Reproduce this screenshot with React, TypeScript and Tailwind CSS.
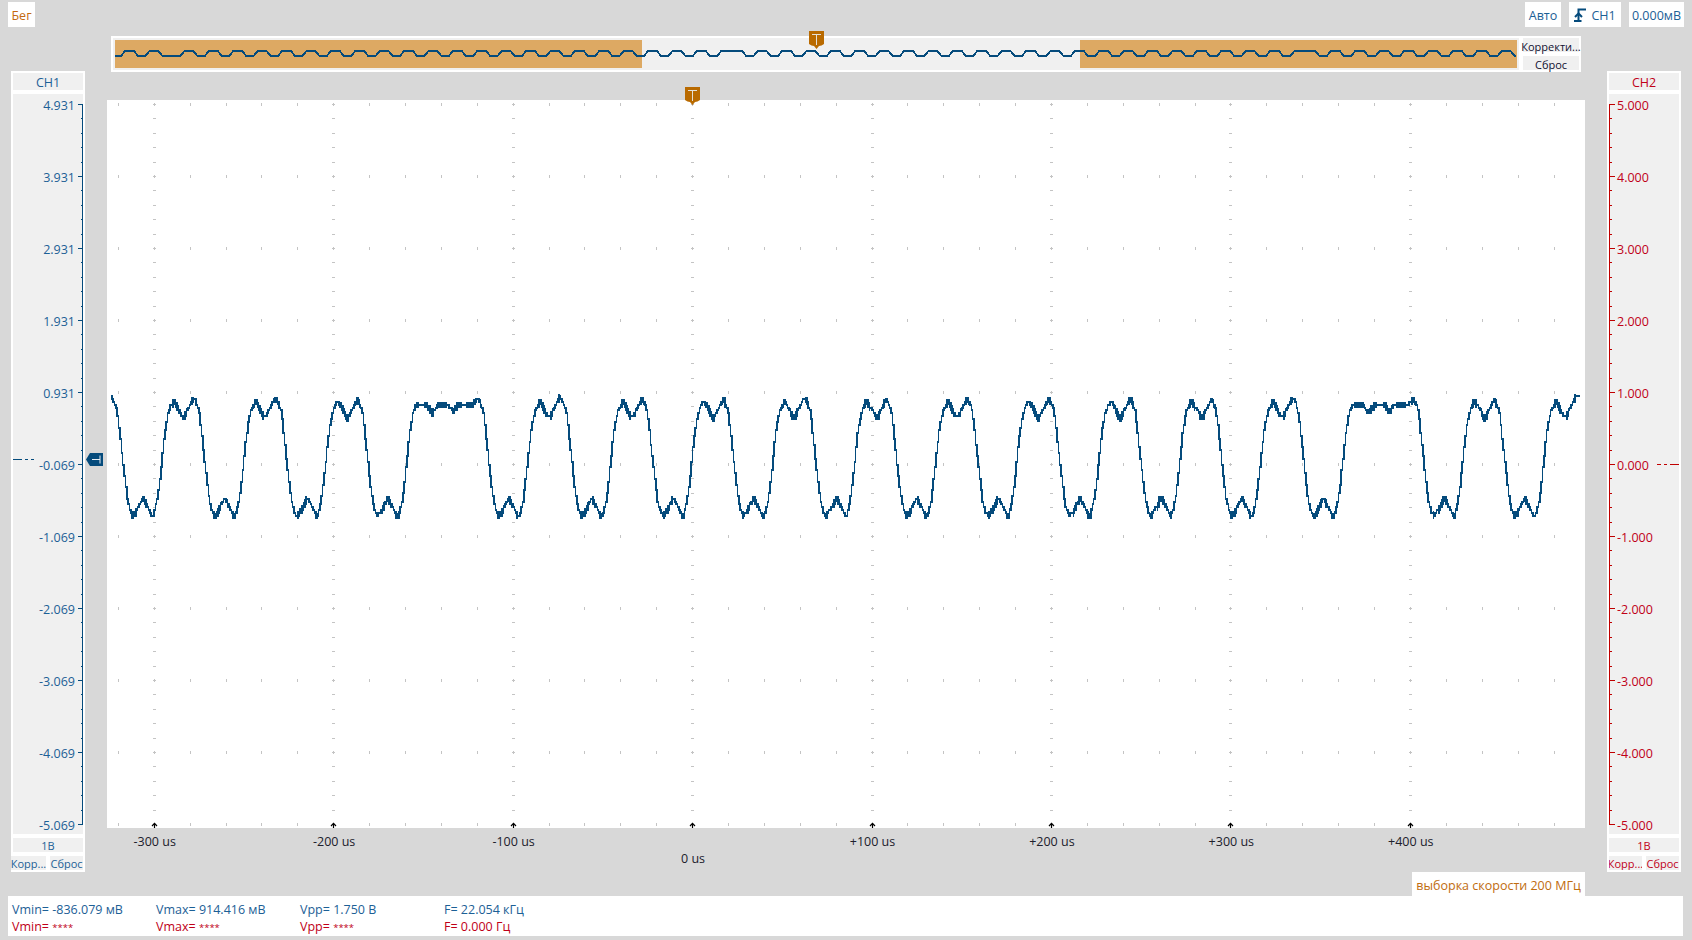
import React from "react";

const BLUE = "#054b7c";
const TXT_BLUE = "#1c6096";
const RED = "#c00018";
const ORANGE_TXT = "#c06c10";

/* --- main waveform --- */
const NORMAL: [number, number][] = [
  [0, 397], [3, 404], [5.7, 413], [9, 445], [12.4, 475], [15.7, 502], [18, 511], [20.7, 516],
  [26, 508], [31, 497], [36, 508], [41, 518], [45.7, 498], [49, 470], [52.4, 435], [55.7, 415],
  [59, 405], [62, 401], [67, 410], [71.4, 419], [76, 409], [81.5, 397],
];
const FLAT: [number, number][] = [
  [0, 397], [3, 404], [5.7, 413], [9, 445], [12.4, 475], [15.7, 502], [18, 511], [20.7, 516],
  [26, 508], [31, 497], [36, 508], [41, 518], [45.7, 498], [49, 470], [52.4, 435], [55.7, 415],
  [58, 406], [63, 404], [70, 405], [75, 413], [80, 406], [85, 404], [92, 405], [96, 412],
  [100, 406], [105, 404], [112, 406], [116, 404], [121, 397],
];
const peaks = [112, 194, 276, 357, 478, 561, 642, 723, 805, 886, 967, 1049, 1130, 1211, 1293, 1413, 1494, 1576];

function interp(pts: [number, number][], u: number) {
  for (let i = 0; i < pts.length - 1; i++) {
    const [a, ya] = pts[i];
    const [b, yb] = pts[i + 1];
    if (u >= a && u <= b) return ya + ((yb - ya) * (u - a)) / (b - a);
  }
  return pts[pts.length - 1][1];
}
function waveRaw(x: number) {
  for (let i = 0; i < peaks.length - 1; i++) {
    if (x >= peaks[i] && x < peaks[i + 1]) {
      return interp(peaks[i + 1] - peaks[i] > 100 ? FLAT : NORMAL, x - peaks[i]);
    }
  }
  return 397;
}
function wave(x: number) {
  return (waveRaw(x - 0.9) + waveRaw(x) + waveRaw(x + 0.9)) / 3;
}
function buildWave() {
  const X0 = 107;
  const Y0 = 100;
  let d = "";
  const q = (y: number) => Math.round(y / 2.85) * 2.85;
  const sx = 1.36;
  for (let i = 0; i * sx + 111 < 1579; i++) {
    const x = 111 + i * sx;
    const y1 = q(wave(x));
    const y2 = q(wave(x + sx));
    let top = Math.min(y1, y2) - 1;
    let bot = Math.max(y1, y2) + 1;
    const slope = Math.abs(wave(x + 2.5) - wave(x - 2.5)) / 5;
    if (slope < 2) {
      const blk = Math.floor(x / 4.7) % 3;
      if (blk !== 2) {
        top -= 1.5;
        bot += 2.5;
      }
    }
    d += `M${(x - X0).toFixed(2)} ${(top - Y0).toFixed(2)}h${(sx + 0.2).toFixed(2)}V${(bot - Y0).toFixed(2)}h-${(sx + 0.2).toFixed(2)}z`;
  }
  return d;
}
const wavePath = buildWave();

/* --- mini waveform --- */
function buildMini() {
  const segs: { x: number; hi: boolean }[] = [];
  let x = 124;
  let guard = 0;
  while (x < 1520 && guard++ < 300) {
    const nearA = x > 730 - 12 && x < 730 + 12;
    const nearB = x > 1297 - 12 && x < 1297 + 12;
    segs.push({ x, hi: true });
    x += nearA || nearB ? 25 : 13;
    segs.push({ x, hi: false });
    x += Math.abs(x - 163) < 3 ? 22 : 11.4;
  }
  const LO = 56;
  const HI = 51;
  const OX = 113;
  const OY = 38;
  let d = `M2 ${LO - OY}`;
  for (const s of segs) {
    if (s.x > 1515) break;
    const lvlFrom = s.hi ? LO : HI;
    const lvlTo = s.hi ? HI : LO;
    d += `L${(s.x - 3 - OX).toFixed(1)} ${lvlFrom - OY}L${(s.x + 1 - OX).toFixed(1)} ${lvlTo - OY}`;
  }
  d += `L${1516 - OX} ${56 - OY}`;
  return d;
}
const miniPath = buildMini();

/* --- grid --- */
const majorX = Array.from({ length: 8 }, (_, i) => 154.3 + i * 179.45 - 107);
const minorX = Array.from({ length: 41 }, (_, i) => 118.4 + i * 35.89 - 107);
const rows = Array.from({ length: 51 }, (_, i) => 4.5 + i * 14.4);

function Grid() {
  let d1 = "";
  rows.forEach((y, r) => {
    const R = Math.round(y - 0.5) + 0.5;
    const isMaj = r % 5 === 0;
    const isLast = r === 50;
    majorX.forEach((x) => {
      const X = Math.round(x - 0.5) + 0.5;
      if (isLast) return;
      if (isMaj) d1 += `M${X - 1.5} ${R}h3M${X} ${R - 1.5}v3`;
      else d1 += `M${X - 1.5} ${R}h3`;
    });
    if (isMaj) {
      minorX.forEach((x, i) => {
        const X = Math.round(x - 0.5) + 0.5;
        if ((i - 1) % 5 === 0) return;
        if (X < 1478) d1 += `M${X} ${R - 1.5}v3`;
      });
    }
  });
  let arrows = "";
  majorX.forEach((x) => {
    const X = Math.round(x - 0.5) + 0.5;
    arrows += `M${X} 728V723M${X - 2.5} 726L${X} 723.3L${X + 2.5} 726`;
  });
  return (
    <svg className="absolute inset-0" width="1478" height="728" viewBox="0 0 1478 728">
      <path d={d1} stroke="#c4c4c4" strokeWidth="1" fill="none" shapeRendering="crispEdges" />
      <path d={arrows} stroke="#000" strokeWidth="1.2" fill="none" />
      <path d={wavePath} fill={BLUE} shapeRendering="crispEdges" />
    </svg>
  );
}

function TMarker({ className }: { className: string }) {
  return (
    <svg className={className} width="15" height="18" viewBox="0 0 15 18">
      <path d="M0 0H15V13L12.5 14.5L10 15L7.5 18L5 15L2.5 14.5L0 13Z" fill="#b96a00" />
      <path d="M3 3.5H12M7.5 3.5V14" stroke="#e4e0d8" strokeWidth="1" fill="none" />
    </svg>
  );
}

function AxisTicks({ side, color }: { side: "l" | "r"; color: string }) {
  let d = "";
  for (let i = 0; i <= 50; i++) {
    const y = Math.round(10 + i * 14.4) + 0.5;
    const major = i % 5 === 0;
    if (side === "l") d += `M${major ? 4 : 7} ${y}H9`;
    else d += `M0 ${y}H${major ? 6 : 3}`;
  }
  d += side === "l" ? "M8.5 10.5V730.5" : "M0.5 10.5V730.5";
  return (
    <svg
      className={`absolute top-0 ${side === "l" ? "right-0" : "left-0"}`}
      width="9"
      height="740"
      viewBox="0 0 9 740"
    >
      <path d={d} stroke={color} strokeWidth="1" fill="none" shapeRendering="crispEdges" />
    </svg>
  );
}

const labelsL = ["4.931", "3.931", "2.931", "1.931", "0.931", "-0.069", "-1.069", "-2.069", "-3.069", "-4.069", "-5.069"];
const labelsR = ["5.000", "4.000", "3.000", "2.000", "1.000", "0.000", "-1.000", "-2.000", "-3.000", "-4.000", "-5.000"];

function ChannelPanel({ side }: { side: "l" | "r" }) {
  const left = side === "l";
  const color = left ? TXT_BLUE : RED;
  const labels = left ? labelsL : labelsR;
  return (
    <div className="w-[74px] h-[801px] bg-white flex flex-col shrink-0 relative px-[2px]" style={{ color }}>
      <div className="mt-[2px] h-[17px] bg-[#f0f0f0] flex items-center justify-center pt-[4px]">{left ? "CH1" : "CH2"}</div>
      <div className={`mt-[4px] h-[740px] bg-[#f0f0f0] relative flex flex-col pt-[4px] gap-[56px] ${left ? "items-end pr-[8px]" : "items-start pl-[8px]"}`}>
        <AxisTicks side={side} color={left ? BLUE : "#c00000"} />
        {labels.map((l) => (
          <div key={l} className="h-[16px] leading-[16px]">{l}</div>
        ))}
        <svg
          className={`absolute ${left ? "left-0 top-[363px]" : "right-0 top-[368px]"}`}
          width="22"
          height="5"
          viewBox="0 0 22 5"
        >
          <path d={left ? "M0 2.5H9M12 2.5H15M18 2.5H21" : "M0 2.5H4M7 2.5H10M13 2.5H22"} stroke={left ? BLUE : "#c00000"} strokeWidth="1" shapeRendering="crispEdges" />
        </svg>
      </div>
      <div className="mt-[4px] h-[14px] bg-[#f0f0f0] flex items-center justify-center text-[11px]">1В</div>
      <div className={`mt-[4px] h-[14px] flex gap-[4px] text-[11px] ${left ? "-ml-[2px]" : ""}`}>
        <div className={`bg-[#f0f0f0] flex items-center justify-center overflow-hidden whitespace-nowrap ${left ? "w-[35px]" : "w-[33px]"}`}>Корр...</div>
        <div className="bg-[#f0f0f0] flex items-center justify-center w-[33px] overflow-hidden">Сброс</div>
      </div>
    </div>
  );
}

function Chip({ children, className }: { children: React.ReactNode; className: string }) {
  return <div className={`h-[25px] bg-white flex items-center justify-center pt-[4px] ${className}`}>{children}</div>;
}

const xLabels = ["-300 us", "-200 us", "-100 us", "0 us", "+100 us", "+200 us", "+300 us", "+400 us"];

const statsBlue = ["Vmin= -836.079 мВ", "Vmax= 914.416 мВ", "Vpp= 1.750 В", "F= 22.054 кГц"];
const statsRed = ["Vmin= ", "Vmax= ", "Vpp= ", "F= 0.000 Гц"];

export default function App() {
  return (
    <div
      className="w-[1692px] h-[940px] bg-[#d8d8d8] overflow-hidden flex flex-col text-[12.5px] leading-none"
      style={{ fontFamily: '"Open Sans", "Noto Sans", sans-serif' }}
    >
      {/* top bar */}
      <div className="mt-[2px] h-[25px] flex pl-[8px] pr-[8px] shrink-0">
        <Chip className="w-[27px] text-[#c46a10]">Бег</Chip>
        <div className="flex-1" />
        <Chip className="w-[36px] text-[#1c6096]">Авто</Chip>
        <Chip className="ml-[8px] w-[52px] gap-[5px] text-[#1c6096]">
          <svg className="-mt-[4px]" width="12" height="14" viewBox="0 0 12 14">
            <path d="M0 13H7.5M4.5 13V1.5H12" stroke={BLUE} strokeWidth="2" fill="none" />
            <path d="M1 9L4.5 5.5L8 9" stroke={BLUE} strokeWidth="2" fill="none" />
          </svg>
          <span>CH1</span>
        </Chip>
        <Chip className="ml-[8px] w-[55px] text-[#1c6096]">0.000мВ</Chip>
      </div>

      {/* overview strip */}
      <div className="mt-[9px] ml-[111px] w-[1470px] h-[36px] bg-white flex p-[2px] gap-[4px] shrink-0 relative">
        <div className="w-[1406px] shrink-0 h-[32px] bg-[#f0f0f0] p-[2px] flex justify-between relative">
          <div className="w-[527px] h-[28px] bg-[#dda963]" />
          <div className="w-[437px] h-[28px] bg-[#dda963]" />
          <svg className="absolute inset-0" width="1406" height="32" viewBox="0 0 1406 32">
            <path d={miniPath} stroke={BLUE} strokeWidth="2" fill="none" strokeLinejoin="miter" shapeRendering="crispEdges" />
          </svg>
        </div>
        <div className="flex-1 min-w-0 flex flex-col justify-between text-[11px] text-[#101030]">
          <div className="h-[14px] bg-[#f0f0f0] flex items-center justify-center whitespace-nowrap pt-[2px]">Корректи...</div>
          <div className="h-[14px] bg-[#f0f0f0] flex items-center justify-center pt-[2px]">Сброс</div>
        </div>
        <TMarker className="absolute left-[698px] -top-[5px]" />
      </div>

      {/* main */}
      <div className="-mt-[1px] flex pl-[11px] shrink-0 h-[801px]">
        <ChannelPanel side="l" />
        <div className="w-[22px] shrink-0 relative">
          <svg className="absolute left-[1px] top-[381px]" width="17" height="15" viewBox="0 0 17 15">
            <path d="M0 7.5L4 1H17V14H4Z" fill={BLUE} />
            <path d="M6 7.5H14M14 3.5V11.5" stroke="#e8eef4" strokeWidth="1" fill="none" />
          </svg>
        </div>
        <div className="w-[1478px] shrink-0 flex flex-col relative">
          <TMarker className="absolute left-[578px] top-[16px] z-10" />
          <div className="mt-[29px] h-[728px] bg-white relative shrink-0">
            <Grid />
          </div>
          <div className="flex -ml-[42px] text-[#20202c] mt-[7px] shrink-0">
            {xLabels.map((l, i) => (
              <div key={l} className={`w-[179.45px] shrink-0 text-center h-[14px] leading-[14px] ${i === 3 ? "mt-[17px]" : ""}`}>
                {l}
              </div>
            ))}
          </div>
          <div
            className="absolute right-0 top-[801px] w-[173px] h-[24px] bg-white flex items-center justify-center pt-[5px] whitespace-nowrap"
            style={{ color: ORANGE_TXT }}
          >
            выборка скорости 200 МГц
          </div>
        </div>
        <div className="w-[22px] shrink-0" />
        <ChannelPanel side="r" />
      </div>

      {/* stats */}
      <div className="mt-[24px] ml-[8px] w-[1675px] h-[40px] bg-white shrink-0 pl-[4px] pt-[6px] flex flex-col gap-[1px]">
        <div className="flex h-[16px] items-center" style={{ color: TXT_BLUE }}>
          {statsBlue.map((s) => (
            <div key={s} className="w-[144px] whitespace-pre">{s}</div>
          ))}
        </div>
        <div className="flex h-[16px] items-center" style={{ color: RED }}>
          {statsRed.map((s, i) => (
            <div key={s} className="w-[144px] whitespace-pre">
              {s}
              {i < 3 ? <span className="text-[9.5px]">****</span> : null}
            </div>
          ))}
        </div>
      </div>
    </div>
  );
}
